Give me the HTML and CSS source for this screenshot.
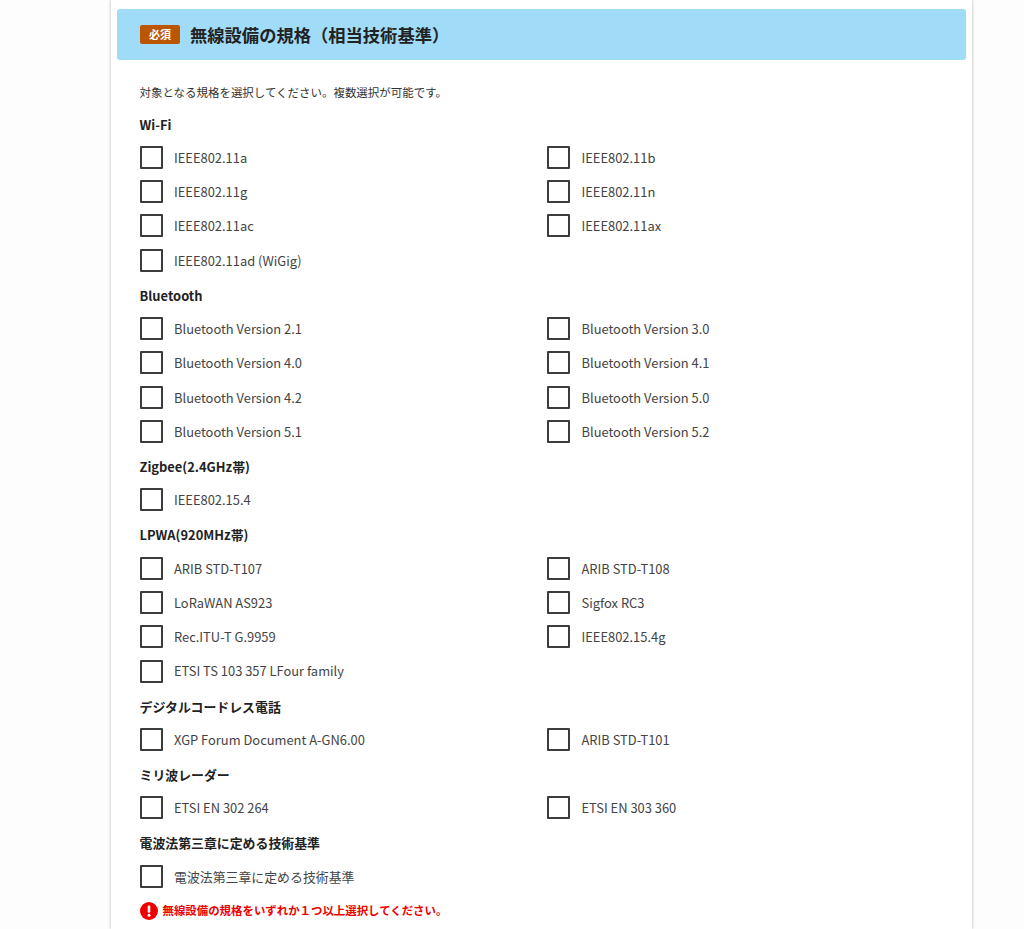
FILE: index.html
```html
<!doctype html>
<html lang="ja">
<head>
	<meta charset="UTF-8">
	<title>無線設備の規格</title>
	<link rel="stylesheet" href="styles.css">
</head>
<body>
	<div class="card">
		<header class="sec-head">
			<span class="badge">必須</span>
			<h2>無線設備の規格（相当技術基準）</h2>
		</header>
		<div class="sec-body">
			<p class="lead">対象となる規格を選択してください。複数選択が可能です。</p>

			<h3>Wi-Fi</h3>
			<div class="opts">
				<label class="opt"><input type="checkbox"><span>IEEE802.11a</span></label>
				<label class="opt"><input type="checkbox"><span>IEEE802.11b</span></label>
				<label class="opt"><input type="checkbox"><span>IEEE802.11g</span></label>
				<label class="opt"><input type="checkbox"><span>IEEE802.11n</span></label>
				<label class="opt"><input type="checkbox"><span>IEEE802.11ac</span></label>
				<label class="opt"><input type="checkbox"><span>IEEE802.11ax</span></label>
				<label class="opt"><input type="checkbox"><span>IEEE802.11ad (WiGig)</span></label>
			</div>

			<h3>Bluetooth</h3>
			<div class="opts">
				<label class="opt"><input type="checkbox"><span>Bluetooth Version 2.1</span></label>
				<label class="opt"><input type="checkbox"><span>Bluetooth Version 3.0</span></label>
				<label class="opt"><input type="checkbox"><span>Bluetooth Version 4.0</span></label>
				<label class="opt"><input type="checkbox"><span>Bluetooth Version 4.1</span></label>
				<label class="opt"><input type="checkbox"><span>Bluetooth Version 4.2</span></label>
				<label class="opt"><input type="checkbox"><span>Bluetooth Version 5.0</span></label>
				<label class="opt"><input type="checkbox"><span>Bluetooth Version 5.1</span></label>
				<label class="opt"><input type="checkbox"><span>Bluetooth Version 5.2</span></label>
			</div>

			<h3>Zigbee(2.4GHz帯)</h3>
			<div class="opts">
				<label class="opt"><input type="checkbox"><span>IEEE802.15.4</span></label>
			</div>

			<h3>LPWA(920MHz帯)</h3>
			<div class="opts">
				<label class="opt"><input type="checkbox"><span>ARIB STD-T107</span></label>
				<label class="opt"><input type="checkbox"><span>ARIB STD-T108</span></label>
				<label class="opt"><input type="checkbox"><span>LoRaWAN AS923</span></label>
				<label class="opt"><input type="checkbox"><span>Sigfox RC3</span></label>
				<label class="opt"><input type="checkbox"><span>Rec.ITU-T G.9959</span></label>
				<label class="opt"><input type="checkbox"><span>IEEE802.15.4g</span></label>
				<label class="opt"><input type="checkbox"><span>ETSI TS 103 357 LFour family</span></label>
			</div>

			<h3>デジタルコードレス電話</h3>
			<div class="opts">
				<label class="opt"><input type="checkbox"><span>XGP Forum Document A-GN6.00</span></label>
				<label class="opt"><input type="checkbox"><span>ARIB STD-T101</span></label>
			</div>

			<h3>ミリ波レーダー</h3>
			<div class="opts">
				<label class="opt"><input type="checkbox"><span>ETSI EN 302 264</span></label>
				<label class="opt"><input type="checkbox"><span>ETSI EN 303 360</span></label>
			</div>

			<h3>電波法第三章に定める技術基準</h3>
			<div class="opts">
				<label class="opt"><input type="checkbox"><span>電波法第三章に定める技術基準</span></label>
			</div>

			<p class="error">
				<svg class="error-icon" viewBox="0 0 18 18" width="18" height="18"><circle cx="9" cy="9" r="9" fill="#ee0000"/><rect x="7.7" y="3.4" width="2.6" height="7.4" rx="1" fill="#fff"/><circle cx="9" cy="13.2" r="1.5" fill="#fff"/></svg>
				<span>無線設備の規格をいずれか１つ以上選択してください。</span>
			</p>
		</div>
	</div>
</body>
</html>
```

FILE: styles.css
```css
html,
body{
	height: 100%;
	overflow: hidden;
}
body{
	margin: 0;
	background-color: #fdfdfd;
	font: 12.9px/1.5 "Noto Sans CJK JP", "Noto Sans", sans-serif;
	color: #333;
}
.card{
	box-sizing: border-box;
	width: 861px;
	height: 100%;
	margin-left: 111px;
	padding: 9px 6px 0;
	background-color: #fff;
	box-shadow: 0 0 3px rgba(0,0,0,.3);
}
.sec-head{
	display: flex;
	align-items: center;
	gap: 10px;
	height: 51px;
	padding-left: 23px;
	background-color: #a0dbf7;
	border-radius: 3px;
}
.sec-head h2{
	margin: 0;
	font-size: 17.3px;
	font-weight: 700;
	color: #222;
}
.badge{
	width: 40px;
	height: 19px;
	border-radius: 2px;
	background-color: #bb5500;
	color: #fff;
	font-size: 11px;
	font-weight: 700;
	line-height: 19px;
	text-align: center;
}
.sec-body{
	padding: 23px 23px 0 22.5px;
}
.lead{
	margin: 0 0 13.5px;
	font-size: 11.47px;
	line-height: 18px;
}
h3{
	margin: 0 0 5.7px;
	font-size: 12.9px;
	font-weight: 700;
	line-height: 20px;
	color: #222;
}
.opts{
	display: grid;
	grid-template-columns: 407.5px 1fr;
	grid-auto-rows: 34.3px;
	margin-bottom: 8.4px;
}
.opt{
	display: flex;
	align-items: center;
	gap: 11.5px;
	color: #444;
}
.opt input{
	appearance: none;
	box-sizing: border-box;
	width: 23px;
	height: 23px;
	margin: 0;
	border: 2px solid #3c3c3c;
	border-radius: 1px;
	background-color: #fff;
}
.error{
	display: flex;
	align-items: center;
	gap: 5px;
	margin: 2px 0 0;
	color: #ee0000;
	font-size: 11.43px;
	font-weight: 700;
}
```
